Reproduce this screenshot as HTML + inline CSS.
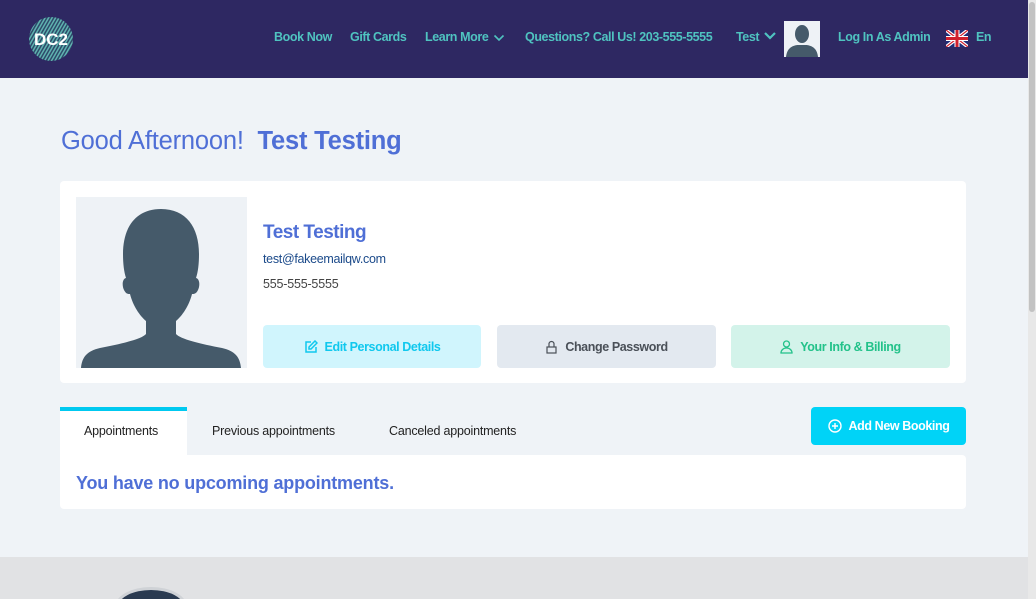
<!DOCTYPE html>
<html style="overflow:hidden;width:1036px;height:599px"><head><style>
*{margin:0;padding:0;box-sizing:border-box}
body{width:1036px;height:599px;overflow:hidden;background:#eff3f7;font-family:"Liberation Sans",sans-serif;position:relative}
.hdr{position:absolute;left:0;top:0;width:1028px;height:78px;background:#2e2862}
.nav{position:absolute;top:30px;font-size:12.5px;font-weight:bold;color:#4fc3c0;white-space:nowrap;letter-spacing:-0.4px}
.sb{position:absolute;left:1028px;top:0;width:8px;height:599px;background:#e8e8e8}
.sb div{position:absolute;left:1px;top:2px;width:6px;height:310px;background:#c2c2c2;border-radius:3px}
.abs{position:absolute}
.btn{position:absolute;top:325px;height:43px;border-radius:4px;font-size:12.5px;font-weight:bold;display:flex;align-items:center;justify-content:center;gap:7px;letter-spacing:-0.4px}
.tab{position:absolute;top:424px;font-size:12.5px;color:#222;letter-spacing:-0.2px}
</style></head><body>
<div class="hdr">
 <svg class="abs" style="left:28px;top:16px" width="46" height="46" viewBox="0 0 46 46">
  <defs><pattern id="p" width="3" height="3" patternUnits="userSpaceOnUse" patternTransform="rotate(30)"><rect width="1.5" height="3" fill="#5fb3b0"/><rect x="1.5" width="1.5" height="3" fill="#2e4a6a"/></pattern></defs>
  <circle cx="23" cy="23" r="22" fill="url(#p)"/>
  <text x="23" y="29" font-family="Liberation Sans" font-weight="bold" font-size="17" fill="#fff" text-anchor="middle">DC2</text>
 </svg>
 <div class="nav" style="left:274px">Book Now</div>
 <div class="nav" style="left:350px">Gift Cards</div>
 <div class="nav" style="left:425px">Learn More</div>
 <svg class="abs" style="left:493px;top:34px" width="12" height="8" viewBox="0 0 12 8"><path d="M1.5 1.5l4.5 4.5 4.5-4.5" stroke="#4fc3c0" stroke-width="1.6" fill="none"/></svg>
 <div class="nav" style="left:525px">Questions? Call Us! 203-555-5555</div>
 <div class="nav" style="left:736px">Test</div>
 <svg class="abs" style="left:763px;top:31px" width="14" height="10" viewBox="0 0 14 10"><path d="M2 2l5 5 5-5" stroke="#4fc3c0" stroke-width="2.2" fill="none"/></svg>
 <svg class="abs" style="left:784px;top:21px" width="36" height="36" viewBox="0 0 36 36"><rect width="36" height="36" fill="#eef2f6"/><ellipse cx="18" cy="13" rx="7" ry="9" fill="#455a6a"/><path d="M2 36c1-9 6-11 11-12h10c5 1 10 3 11 12z" fill="#455a6a"/></svg>
 <div class="nav" style="left:838px">Log In As Admin</div>
 <svg class="abs" style="left:946px;top:30px" width="22" height="17" viewBox="0 0 22 17"><rect width="22" height="17" fill="#1f2e7a"/><path d="M0 0L22 17M22 0L0 17" stroke="#fff" stroke-width="3.5"/><path d="M0 0L22 17M22 0L0 17" stroke="#d0202e" stroke-width="1.2"/><path d="M11 0v17M0 8.5h22" stroke="#fff" stroke-width="5"/><path d="M11 0v17M0 8.5h22" stroke="#d0202e" stroke-width="3"/></svg>
 <div class="nav" style="left:976px">En</div>
</div>
<div class="abs" style="left:61px;top:127px;font-size:25.5px;color:#4f6fd6;letter-spacing:-0.2px">Good Afternoon! &nbsp;<b>Test Testing</b></div>
<div class="abs" style="left:60px;top:181px;width:906px;height:202px;background:#fff;border-radius:4px"></div>
<svg class="abs" style="left:76px;top:197px" width="171" height="171" viewBox="0 0 171 171"><rect width="171" height="171" fill="#eef2f6"/><path d="M85 12c-25 0-38 18-38 45 0 10 1 18 3 24-4 1-4 8-2 12 2 4 4 4 6 4 3 12 10 22 16 27v13c-4 5-25 10-46 14-13 3-18 9-19 20h160c-1-11-6-17-19-20-21-4-42-9-46-14v-13c6-5 13-15 16-27 2 0 4 0 6-4 2-4 2-11-2-12 2-6 3-14 3-24 0-27-13-45-38-45z" fill="#455a6a"/></svg>
<div class="abs" style="left:263px;top:222px;font-size:19px;font-weight:bold;color:#4f6fd6;letter-spacing:-0.5px">Test Testing</div>
<div class="abs" style="left:263px;top:252px;font-size:12.5px;color:#1b4a8a;letter-spacing:-0.3px">test@fakeemailqw.com</div>
<div class="abs" style="left:263px;top:277px;font-size:12.5px;color:#444;letter-spacing:-0.2px">555-555-5555</div>
<div class="btn" style="left:263px;width:218px;background:#d0f5fd;color:#10c8ee"><svg width="14" height="14" viewBox="0 0 14 14" fill="none" stroke="#10c8ee" stroke-width="1.5"><path d="M7 2H2v10h10V7"/><path d="M11 1l2 2-6 6H5V7z"/></svg>Edit Personal Details</div>
<div class="btn" style="left:497px;width:219px;background:#e3e9f0;color:#4a5058"><svg width="13" height="14" viewBox="0 0 13 14" fill="none" stroke="#4a5058" stroke-width="1.2"><path d="M4 7V4a2.5 2.5 0 015 0v3"/><rect x="2" y="7" width="9" height="6"/></svg>Change Password</div>
<div class="btn" style="left:731px;width:219px;background:#d3f3ea;color:#23c28a"><svg width="13" height="14" viewBox="0 0 13 14" fill="none" stroke="#23c28a" stroke-width="1.3"><circle cx="6.5" cy="4" r="3"/><path d="M1 13c0-3 2.5-5 5.5-5s5.5 2 5.5 5z"/></svg>Your Info &amp; Billing</div>
<div class="abs" style="left:60px;top:407px;width:127px;height:49px;background:#fff;border-top:4px solid #00c9f0"></div>
<div class="tab" style="left:84px">Appointments</div>
<div class="tab" style="left:212px">Previous appointments</div>
<div class="tab" style="left:389px">Canceled appointments</div>
<div class="btn" style="left:811px;top:407px;width:155px;height:38px;background:#00d3f7;color:#fff"><svg width="14" height="14" viewBox="0 0 14 14" fill="none" stroke="#fff" stroke-width="1.4"><circle cx="7" cy="7" r="6"/><path d="M7 4v6M4 7h6"/></svg>Add New Booking</div>
<div class="abs" style="left:60px;top:455px;width:906px;height:54px;background:#fff;border-radius:0 4px 4px 4px"></div>
<div class="abs" style="left:76px;top:473px;font-size:18px;font-weight:bold;color:#4f6fd6;letter-spacing:-0.2px">You have no upcoming appointments.</div>
<div class="abs" style="left:0;top:557px;width:1028px;height:42px;background:#e1e2e4;overflow:hidden">
 <div class="abs" style="left:115px;top:30px;width:72px;height:40px;border-radius:50%;background:#2a3a50;border:3px solid #cfd2d6"></div>
</div>
<div class="sb"><div></div></div>
</body></html>
